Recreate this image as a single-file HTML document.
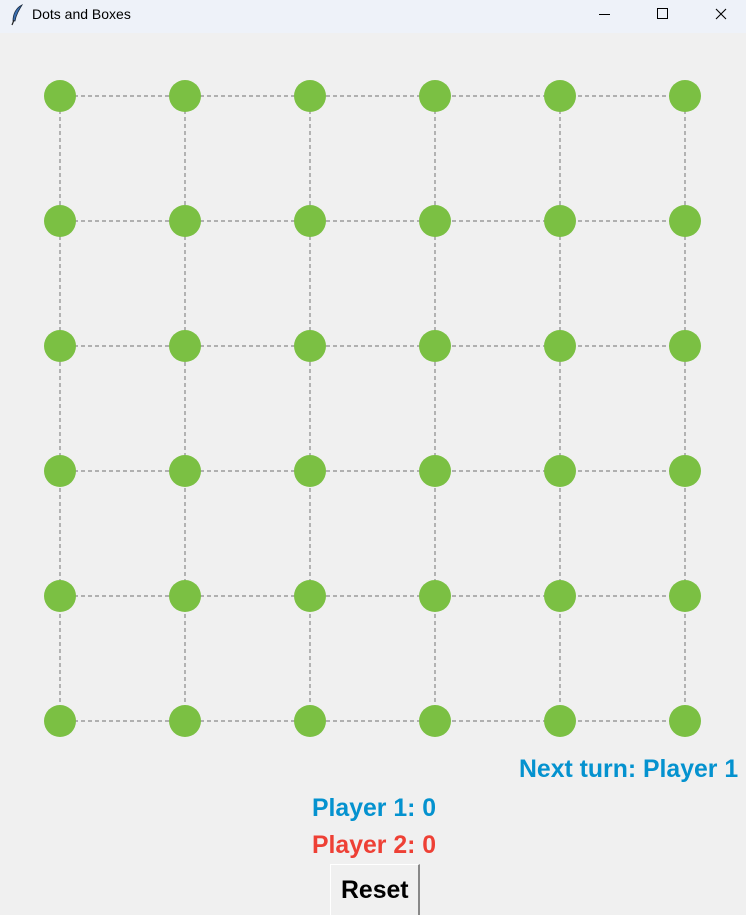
<!DOCTYPE html>
<html><head><style>
body{margin:0;width:746px;height:910px;background:#f0f0f0;overflow:hidden;position:relative;font-family:"Liberation Sans",Arial,sans-serif}
.tb{position:absolute;left:0;top:0;width:746px;height:33px;background:#eef2f9}
.t{position:absolute;font-weight:bold;font-size:24.8px;white-space:nowrap}
</style></head><body>
<div class="tb">
<svg style="position:absolute;left:10px;top:4px" width="14" height="22" viewBox="0 0 14 22"><path d="M12 1 C6 4 3 10 3 17 L5 17 C6 11 9 6 12 1Z" fill="#3a6fb0" stroke="#1a2a40" stroke-width="0.8"/><path d="M4 16 L2 21" stroke="#222" stroke-width="1.2"/></svg>
<span style="position:absolute;left:32px;top:6px;font-size:14px;color:#000">Dots and Boxes</span>
<svg style="position:absolute;left:590px;top:0" width="156" height="33"><path d="M9 14.5H20" stroke="#000" stroke-width="1"/><rect x="67.5" y="8.5" width="10" height="10" fill="none" stroke="#000"/><path d="M126 9L136 19M136 9L126 19" stroke="#000" stroke-width="1.1"/></svg>
</div>
<svg style="position:absolute;left:0;top:0" width="746" height="760">
<defs><circle id="c" r="16" fill="#7bc043"/></defs>
<g stroke="#8a8a8a" stroke-width="1.2" stroke-dasharray="4,3" fill="none">
<path d="M60 96H685M60 221H685M60 346H685M60 471H685M60 596H685M60 721H685M60 96V721M185 96V721M310 96V721M435 96V721M560 96V721M685 96V721"/>
</g>
<g>
<use href="#c" x="60" y="96"/><use href="#c" x="185" y="96"/><use href="#c" x="310" y="96"/><use href="#c" x="435" y="96"/><use href="#c" x="560" y="96"/><use href="#c" x="685" y="96"/>
<use href="#c" x="60" y="221"/><use href="#c" x="185" y="221"/><use href="#c" x="310" y="221"/><use href="#c" x="435" y="221"/><use href="#c" x="560" y="221"/><use href="#c" x="685" y="221"/>
<use href="#c" x="60" y="346"/><use href="#c" x="185" y="346"/><use href="#c" x="310" y="346"/><use href="#c" x="435" y="346"/><use href="#c" x="560" y="346"/><use href="#c" x="685" y="346"/>
<use href="#c" x="60" y="471"/><use href="#c" x="185" y="471"/><use href="#c" x="310" y="471"/><use href="#c" x="435" y="471"/><use href="#c" x="560" y="471"/><use href="#c" x="685" y="471"/>
<use href="#c" x="60" y="596"/><use href="#c" x="185" y="596"/><use href="#c" x="310" y="596"/><use href="#c" x="435" y="596"/><use href="#c" x="560" y="596"/><use href="#c" x="685" y="596"/>
<use href="#c" x="60" y="721"/><use href="#c" x="185" y="721"/><use href="#c" x="310" y="721"/><use href="#c" x="435" y="721"/><use href="#c" x="560" y="721"/><use href="#c" x="685" y="721"/>
</g></svg>
<div class="t" style="left:519px;top:756px;color:#0492cf">Next turn: Player 1</div>
<div class="t" style="left:312px;top:795px;color:#0492cf">Player 1: 0</div>
<div class="t" style="left:312px;top:832px;color:#ee4035">Player 2: 0</div>
<div style="position:absolute;left:330px;top:864px;width:87px;height:50px;border-left:1px solid #fff;border-top:1px solid #fff;border-right:2px solid #888;background:#f0f0f0"></div>
<div class="t" style="left:341px;top:877px;color:#000">Reset</div>
</body></html>
